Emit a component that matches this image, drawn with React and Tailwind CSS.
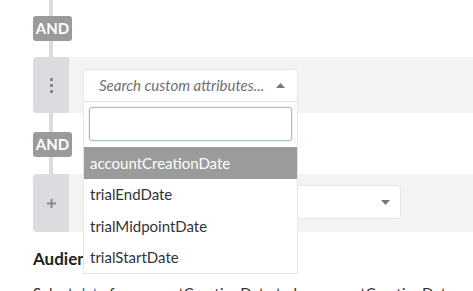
import React from "react";

function Line({ h }) {
  return <div className="w-[4px] ml-[16px] bg-[#dcdcdf]" style={{ height: h }} />;
}

function Badge() {
  return (
    <div className="w-[39px] h-[25px] rounded-[3px] bg-[#9a9a9a] text-white font-bold text-[15px] flex items-center justify-center leading-none">
      AND
    </div>
  );
}

export default function App() {
  const items = ["accountCreationDate", "trialEndDate", "trialMidpointDate", "trialStartDate"];
  return (
    <div className="w-[473px] h-[291px] overflow-hidden bg-white font-['Lato',_'Open_Sans',_sans-serif] text-[#333]">
      <div className="pl-[33px] flex flex-col">
        <Line h={16} />
        <Badge />
        <Line h={16} />
        {/* Row 1 */}
        <div className="flex h-[56px] -mr-[1px] relative z-10">
          <div className="w-[36px] bg-[#dcdce0] rounded-l-[4px] flex flex-col items-center justify-center gap-[3px]">
            <div className="w-[3px] h-[3px] bg-[#888]" />
            <div className="w-[3px] h-[3px] bg-[#888]" />
            <div className="w-[3px] h-[3px] bg-[#888]" />
          </div>
          <div className="flex-1 bg-[#f3f3f5] pl-[14px] pt-[12px]">
            <div className="relative w-[215px]">
              <div className="h-[33px] bg-white border border-[#e6e6ea] border-b-[#e3e3e6] rounded-t-[4px] flex items-center pl-[15px] pr-[12px]">
                <span className="italic text-[15px] text-[#707070] flex-1">Search custom attributes...</span>
                <svg width="9" height="5" viewBox="0 0 9 5"><path d="M0 5 L4.5 0 L9 5 Z" fill="#777" /></svg>
              </div>
              <div className="absolute left-0 top-[33px] w-[215px] bg-white border border-t-0 border-[#e6e6ea] pb-0">
                <div className="px-[5px] pt-[5px] pb-[6px]">
                  <div className="h-[34px] border border-[#a6bccb] rounded-[3px] shadow-[0_0_2px_rgba(120,160,190,0.5)] bg-white" />
                </div>
                {items.map((t, i) => (
                  <div
                    key={t}
                    className={
                      "h-[31.5px] flex items-center pl-[6px] text-[15px] " +
                      (i === 0 ? "bg-[#9b9b9b] text-white" : "text-[#333]")
                    }
                  >
                    {t}
                  </div>
                ))}
              </div>
            </div>
          </div>
        </div>
        <Line h={19} />
        <Badge />
        <Line h={17} />
        {/* Row 2 */}
        <div className="flex h-[58px]">
          <div className="w-[36px] bg-[#dcdce0] rounded-l-[4px] flex items-center justify-center">
            <svg width="9" height="9" viewBox="0 0 9 9"><path d="M3.5 0h2v3.5H9v2H5.5V9h-2V5.5H0v-2h3.5z" fill="#888" /></svg>
          </div>
          <div className="flex-1 bg-[#f3f3f5] pl-[14px] pt-[11px]">
            <div className="w-[318px] h-[34px] bg-white border border-[#e6e6ea] rounded-[4px] flex items-center justify-end pr-[10px]">
              <svg width="9" height="5" viewBox="0 0 9 5"><path d="M0 0 L4.5 5 L9 0 Z" fill="#777" /></svg>
            </div>
          </div>
        </div>
        <div className="pt-[17px] text-[17px] font-bold text-[#222] leading-[20px]">Audience Filters</div>
        <div className="pt-[14px] text-[15px] leading-[20px] text-[#333] whitespace-nowrap">
          Select <span className="text-[#2a6ebb]">data</span> for accountCreationDate to be accountCreationDate
        </div>
      </div>
    </div>
  );
}
